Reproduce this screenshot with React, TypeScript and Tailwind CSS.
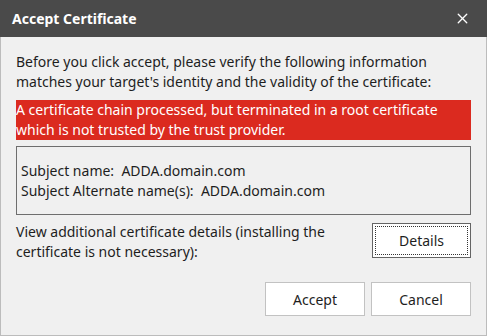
import { X } from "lucide-react"

const font = { fontFamily: '"Segoe UI", "Noto Sans", sans-serif' }

const App = () => {
  return (
    <div className="w-[487px] h-[336px] flex flex-col text-[14px] text-[#1e1e1e]" style={font}>
      <div className="h-[37px] bg-[#4a4a4a] flex items-center justify-between pl-3 pr-[16px]">
        <h1 className="text-white font-bold text-[14px]">Accept Certificate</h1>
        <X className="w-[17px] h-[17px] text-white" strokeWidth={1.9} />
      </div>
      <div className="flex-1 bg-[#f0f0f0] border border-t-0 border-[#bcbcbc] px-[15px] pt-[15px]">
        <p className="leading-[20px]">
          Before you click accept, please verify the following information matches your target's identity and the validity of the certificate:
        </p>
        <div className="bg-[#db2a1f] text-white leading-[20px] mt-[8px] h-[40px]">
          A certificate chain processed, but terminated in a root certificate which is not trusted by the trust provider.
        </div>
        <div className="mt-[6px] h-[69px] border border-[#6e6e6e] flex flex-col justify-center pl-[4px] leading-[20px]">
          <div>Subject name:&nbsp; ADDA.domain.com</div>
          <div>Subject Alternate name(s):&nbsp; ADDA.domain.com</div>
        </div>
        <div className="flex justify-between items-start mt-[6px]">
          <p className="leading-[20px] w-[330px] pt-[1px]">
            View additional certificate details (installing the certificate is not necessary):
          </p>
          <button className="w-[99px] h-[35px] border border-[#646464] bg-white p-[2px] mt-[2px]">
            <span className="flex items-center justify-center w-full h-full border border-dotted border-[#333]">Details</span>
          </button>
        </div>
        <div className="flex justify-end gap-[6px] mt-[20px]">
          <button className="w-[100px] h-[34px] border border-[#c2c2c2] bg-white">Accept</button>
          <button className="w-[100px] h-[34px] border border-[#c2c2c2] bg-white">Cancel</button>
        </div>
      </div>
    </div>
  )
}

export default App
